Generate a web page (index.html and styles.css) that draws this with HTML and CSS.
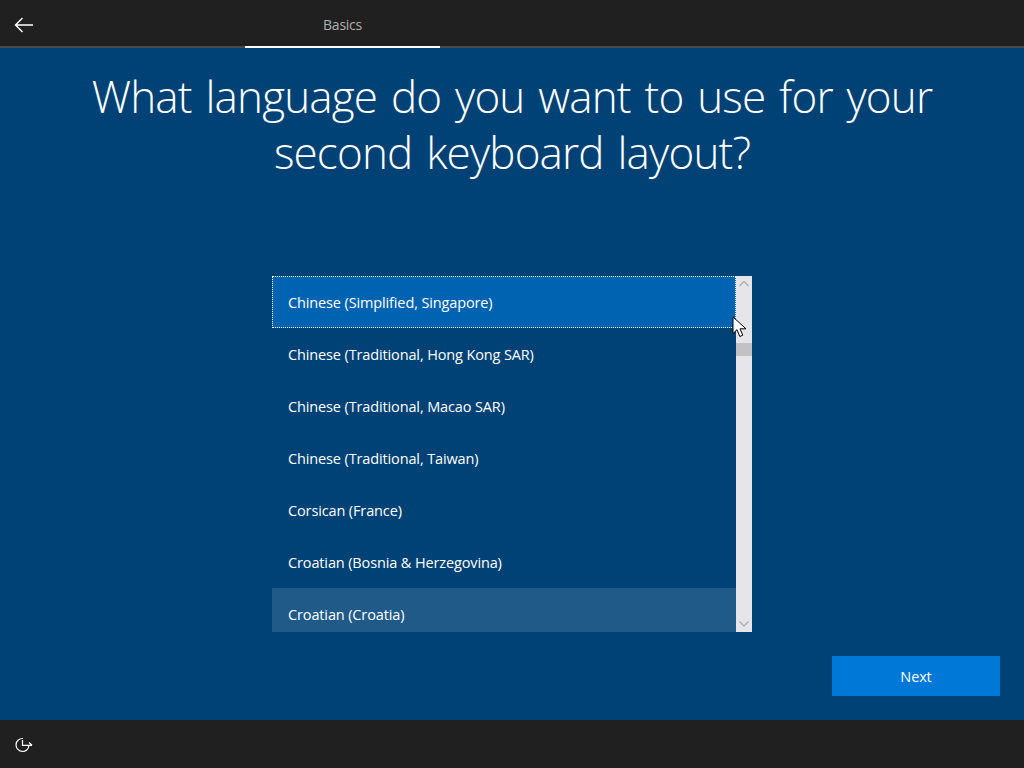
FILE: index.html
```html
<!DOCTYPE html>
<html lang="en">
<head>
<meta charset="utf-8">
<title>Basics</title>
<link rel="stylesheet" href="styles.css">
</head>
<body>
<div class="page">
  <header class="topbar">
    <button class="back" aria-label="Back">
      <svg width="20" height="16" viewBox="0 0 20 16" fill="none" stroke="#fff" stroke-width="1.4"><path d="M19 8H1.5M8.500 1 1.500 8l7 7"/></svg>
    </button>
    <div class="tab">Basics</div>
  </header>
  <main class="main">
    <h1 class="title">What language do you want to use for your<br>second keyboard layout?</h1>
    <div class="listwrap">
      <ul class="list">
        <li class="item selected">Chinese (Simplified, Singapore)</li>
        <li class="item">Chinese (Traditional, Hong Kong SAR)</li>
        <li class="item">Chinese (Traditional, Macao SAR)</li>
        <li class="item">Chinese (Traditional, Taiwan)</li>
        <li class="item">Corsican (France)</li>
        <li class="item">Croatian (Bosnia &amp; Herzegovina)</li>
        <li class="item hover">Croatian (Croatia)</li>
      </ul>
      <div class="scrollbar">
        <svg class="arrow" width="16" height="16" viewBox="0 0 16 16" fill="none" stroke="#a8a8ac" stroke-width="1.2"><path d="M3.500 10 8 5.500 12.500 10"/></svg>
        <div class="track"><div class="thumb"></div></div>
        <svg class="arrow" width="16" height="16" viewBox="0 0 16 16" fill="none" stroke="#a8a8ac" stroke-width="1.2"><path d="M3.500 5.500 8 10 12.500 5.500"/></svg>
      </div>
      <svg class="cursor" width="15" height="22" viewBox="0 0 15 22"><path d="M1 1v16.500l4-3.800 2.800 6.800 3-1.300-2.800-6.400H14z" fill="#fff" stroke="#000" stroke-width="1"/></svg>
    </div>
    <div class="actions"><button class="next">Next</button></div>
  </main>
  <footer class="bottombar">
    <svg width="18" height="16" viewBox="0 0 18 16" fill="none" stroke="#fff" stroke-width="1.2"><path d="M8 1.500A6.500 6.500 0 1 0 14 8.500M7.500 3v5.300h9.500M14 5.500l3 2.800"/></svg>
  </footer>
</div>
</body>
</html>
```
FILE: styles.css
```css
* { box-sizing: border-box; }
html, body { margin: 0; height: 100%; overflow: hidden; }
body { font-family: "Open Sans", "Noto Sans", sans-serif; color: #fff; background: #004275; }
.page { height: 768px; display: flex; flex-direction: column; }
.topbar { height: 48px; flex: none; background: #202020; border-bottom: 2px solid #4a4a4a; display: flex; align-items: stretch; }
.back { width: 245px; flex: none; background: none; border: 0; padding: 3px 0 0 14px; text-align: left; display: flex; align-items: center; }
.tab { width: 195px; height: 48px; flex: none; border-bottom: 2px solid #fff; text-align: center; font-size: 14px; letter-spacing: -0.27px; line-height: 50px; color: #b0b0b0; }
.main { flex: 1; display: flex; flex-direction: column; align-items: center; background: #004275; }
.title { margin: 20px 0 0; height: 208px; font-size: 44px; line-height: 56px; font-weight: 300; letter-spacing: -0.84px; word-spacing: 3.2px; text-align: center; color: #fff; white-space: nowrap; }
.listwrap { position: relative; width: 480px; height: 356px; display: flex; }
.list { list-style: none; margin: 0; padding: 0; width: 464px; height: 356px; overflow: hidden; }
.item { height: 52px; line-height: 54px; padding-left: 16px; font-size: 14.500px; letter-spacing: -0.13px; color: #fff; white-space: nowrap; }
.selected { background: #0063b1; outline: 1px dotted #fff; outline-offset: -1px; }
.hover { background: #1f5a88; }
.scrollbar { width: 16px; height: 356px; background: #e6e6ea; display: flex; flex-direction: column; }
.arrow { flex: none; display: block; }
.track { flex: 1; padding-top: 51px; }
.thumb { height: 13px; background: #c2c2c4; }
.cursor { position: absolute; left: 460px; top: 40px; }
.actions { width: 100%; padding: 24px 24px 0 0; display: flex; justify-content: flex-end; }
.next { width: 168px; height: 40px; border: 0; background: #0078d7; color: #fff; font: inherit; font-size: 14.500px; letter-spacing: -0.13px; }
.bottombar { height: 48px; flex: none; background: #202020; display: flex; align-items: center; padding: 2px 0 0 15px; }
```
